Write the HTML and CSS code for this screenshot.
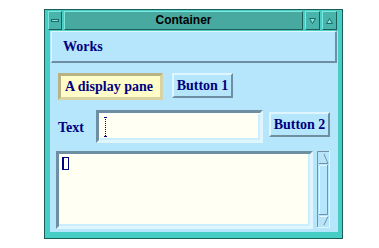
FILE: index.html
```html
<!DOCTYPE html>
<html>
<head>
    <title>Container</title>
    <link rel="stylesheet" href="styles.css">
</head>
<body>
    <div class="window">
        <div class="titlebar">
            <div class="tbtn menu"><span class="bar"></span></div>
            <div class="title">Container</div>
            <div class="tbtn">
                <svg width="7" height="6" viewBox="0 0 7 6"><polygon points="0.5,0.5 6.5,0.5 3.5,5.5" fill="#7fe6de" stroke="#1d6a64" stroke-width="1"/></svg>
            </div>
            <div class="tbtn">
                <svg width="7" height="6" viewBox="0 0 7 6"><polygon points="3.5,0.5 6.5,5.5 0.5,5.5" fill="#7fe6de" stroke="#1d6a64" stroke-width="1"/></svg>
            </div>
        </div>
        <div class="content">
            <div class="header">Works</div>
            <div class="row row-pane">
                <div class="pane">A display pane</div>
                <button class="btn">Button 1</button>
            </div>
            <div class="row row-text">
                <label class="lbl" for="text">Text</label>
                <div class="field" id="text">
                    <svg class="ibeam" width="3" height="20" viewBox="0 0 3 20">
                        <line x1="1.5" y1="0" x2="1.5" y2="20" stroke="#000080" stroke-width="1" stroke-dasharray="1,1"/>
                        <rect x="0" y="0" width="3" height="1" fill="#000080"/>
                        <rect x="0" y="19" width="3" height="1" fill="#000080"/>
                    </svg>
                </div>
                <button class="btn btn-2">Button 2</button>
            </div>
            <div class="row row-area">
                <div class="area"><span class="caret"></span></div>
                <div class="scroll">
                    <svg width="13" height="77" viewBox="0 0 13 77">
                        <rect x="0" y="0" width="13" height="77" fill="#b6e6fb"/>
                        <path d="M0.5 77 V0.5 H13" fill="none" stroke="#7191a3"/>
                        <path d="M12.5 0 V76.5 H0" fill="none" stroke="#dff6ff"/>
                        <!-- up arrow -->
                        <path d="M2 12.5 L6.5 2 L11 12.5" fill="none" stroke="#7191a3"/>
                        <path d="M2 12.5 L6.5 2" fill="none" stroke="#e2f7ff"/>
                        <path d="M2 12.5 H11" fill="none" stroke="#7191a3"/>
                        <!-- slider -->
                        <rect x="2" y="14" width="9" height="50" fill="#b6e6fb"/>
                        <path d="M2.5 64 V14.5 H11" fill="none" stroke="#e2f7ff"/>
                        <path d="M10.5 14 V63.5 H2" fill="none" stroke="#7191a3"/>
                        <!-- down arrow -->
                        <path d="M2 65.5 H11" fill="none" stroke="#e2f7ff"/>
                        <path d="M2 65.5 L6.5 75 L11 65.5" fill="none" stroke="#7191a3"/>
                        <path d="M2 65.5 L6.5 75" fill="none" stroke="#e2f7ff"/>
                    </svg>
                </div>
            </div>
        </div>
    </div>
</body>
</html>
```

FILE: styles.css
```css
body {
    margin: 0;
    background: #ffffff;
}

.window {
    width: 299px;
    height: 230px;
    margin: 9px 0 0 44px;
    box-sizing: border-box;
    background: #46cdc5;
    border: 1px solid #1e5c58;
    padding: 1px 4px 6px 5px;
    display: flex;
    flex-direction: column;
}

.titlebar {
    height: 19px;
    margin: 0 1px 1px -2px;
    display: flex;
    gap: 2px;
}

.title {
    flex: 1;
    background: #48a9a1;
    border-top: 1px solid #7fe6de;
    border-left: 1px solid #7fe6de;
    border-bottom: 1px solid #1d5e59;
    border-right: 1px solid #1d5e59;
    font-family: "Liberation Sans", Arial, sans-serif;
    font-weight: bold;
    font-size: 12px;
    color: #000000;
    text-align: center;
    line-height: 17px;
}

.tbtn {
    width: 15px;
    box-sizing: border-box;
    background: #48b4ac;
    border-top: 1px solid #7fe6de;
    border-left: 1px solid #7fe6de;
    border-bottom: 1px solid #1d5e59;
    border-right: 1px solid #1d5e59;
    display: flex;
    align-items: center;
    justify-content: center;
}

.tbtn.menu {
    width: 14px;
}

.tbtn .bar {
    width: 8px;
    height: 3px;
    background: #7fe6de;
    border: 1px solid #1d6a64;
    box-sizing: border-box;
}

.content {
    flex: 1;
    background: #b6e6fb;
    padding: 0 1px;
    font-family: "Liberation Serif", "Times New Roman", serif;
    font-weight: bold;
    font-size: 14px;
    color: #000080;
}

.header {
    height: 32px;
    box-sizing: border-box;
    border-top: 1px solid #dff6ff;
    border-left: 1px solid #dff6ff;
    border-bottom: 2px solid #6e8fa1;
    border-right: 2px solid #6e8fa1;
    padding-left: 11px;
    line-height: 29px;
}

.row {
    display: flex;
}

.row-pane {
    margin-top: 10px;
    padding-left: 7px;
    gap: 9px;
    align-items: flex-start;
}

.pane {
    width: 105px;
    height: 27px;
    box-sizing: border-box;
    background: #fffcc8;
    border: 3px solid;
    border-color: #b9b282 #d8d3a2 #d8d3a2 #b9b282;
    padding-left: 4px;
    line-height: 21px;
}

.btn {
    width: 61px;
    height: 25px;
    box-sizing: border-box;
    background: #b6e6fb;
    border-top: 2px solid #dff6ff;
    border-left: 2px solid #dff6ff;
    border-bottom: 2px solid #6e8fa1;
    border-right: 2px solid #6e8fa1;
    padding: 0;
    font-family: "Liberation Serif", "Times New Roman", serif;
    font-weight: bold;
    font-size: 14px;
    color: #000080;
    line-height: 20px;
}

.row-text {
    margin-top: 10px;
    padding-left: 7px;
    align-items: flex-start;
}

.lbl {
    width: 38px;
    line-height: 35px;
}

.field {
    width: 167px;
    height: 33px;
    box-sizing: border-box;
    background: #fffff4;
    border: 3px solid;
    border-color: #6e8fa1 #dff6ff #dff6ff #6e8fa1;
    box-shadow: inset 1px 1px 0 #ffffff, inset -2px -2px 0 #c9eefd;
    padding: 4px 0 0 5px;
}

.ibeam {
    display: block;
}

.btn-2 {
    margin-left: 6px;
    margin-top: 2px;
}

.row-area {
    margin-top: 6px;
    padding-left: 5px;
    gap: 4px;
    align-items: flex-start;
}

.area {
    width: 257px;
    height: 78px;
    box-sizing: border-box;
    background: #fffff4;
    border: 3px solid;
    border-color: #6e8fa1 #dff6ff #dff6ff #6e8fa1;
    box-shadow: inset -2px -2px 0 #c9eefd;
    padding: 3px 0 0 3px;
}

.caret {
    display: block;
    width: 7px;
    height: 13px;
    box-sizing: border-box;
    border: 1px solid #000080;
    border-left-width: 2px;
}

.scroll {
    width: 13px;
    height: 77px;
}

.scroll svg {
    display: block;
}
```
